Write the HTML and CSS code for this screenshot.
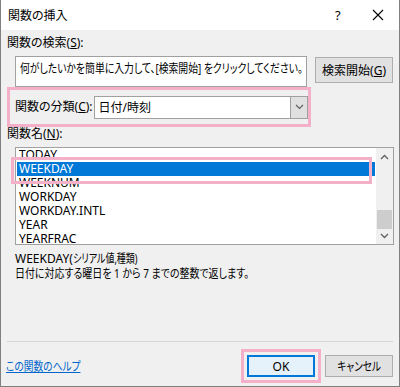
FILE: index.html
```
<!DOCTYPE html>
<html lang="ja">
<head>
<meta charset="utf-8">
<link rel="stylesheet" href="styles.css">
</head>
<body>
<div class="window">
  <div class="titlebar">
    <span class="title">関数の挿入</span>
    <span class="help">?</span>
    <span class="close"><svg width="12" height="12" viewBox="0 0 12 12"><path d="M1 1L11 11M11 1L1 11" stroke="#000" stroke-width="1.1" fill="none"/></svg></span>
  </div>
  <div class="content">
    <div class="label l-search">関数の検索(<u>S</u>):</div>
    <div class="search-row">
      <div class="textbox"><span class="nar nar-tb">何がしたいかを簡単に入力して、[検索開始] をクリックしてください。</span></div>
      <div class="btn btn-search">検索開始(<u>G</u>)</div>
    </div>
    <div class="cat-hl">
      <span class="label">関数の分類(<u>C</u>):</span>
      <div class="select">
        <span class="sel-text">日付/時刻</span>
        <span class="sel-btn"><svg width="9" height="6" viewBox="0 0 9 6"><path d="M1 1L4.5 4.5L8 1" stroke="#606060" stroke-width="1.2" fill="none"/></svg></span>
      </div>
    </div>
    <div class="label l-name">関数名(<u>N</u>):</div>
    <div class="listbox">
      <div class="items">
        <div class="item partial"><span>TODAY</span></div>
        <div class="item sel">WEEKDAY</div>
        <div class="item">WEEKNUM</div>
        <div class="item">WORKDAY</div>
        <div class="item">WORKDAY.INTL</div>
        <div class="item">YEAR</div>
        <div class="item">YEARFRAC</div>
      </div>
      <div class="scrollbar">
        <span class="arrow"><svg width="9" height="6" viewBox="0 0 9 6"><path d="M1 5L4.5 1.5L8 5" stroke="#606060" stroke-width="1.3" fill="none"/></svg></span>
        <div class="track"><div class="thumb"></div></div>
        <span class="arrow"><svg width="9" height="6" viewBox="0 0 9 6"><path d="M1 1L4.5 4.5L8 1" stroke="#606060" stroke-width="1.3" fill="none"/></svg></span>
      </div>
      <div class="item-hl"></div>
    </div>
    <div class="desc">
      <div class="syntax">WEEKDAY(<span class="nar nar-syn">シリアル値,種類)</span></div>
      <div class="explain"><span class="nar nar-ex">日付に対応する曜日を 1 から 7 までの整数で返します。</span></div>
    </div>
    <div class="sep"></div>
    <div class="footer">
      <div class="link-wrap"><a class="link nar nar-link">この関数のヘルプ</a></div>
      <div class="buttons">
        <div class="ok-hl"><div class="btn btn-ok">OK</div></div>
        <div class="btn btn-cancel"><span class="nar nar-cn mid">キャンセル</span></div>
      </div>
    </div>
  </div>
</div>
</body>
</html>
```
FILE: styles.css
```
* { box-sizing: border-box; }
html, body { margin: 0; padding: 0; }
body {
  width: 400px; height: 387px; overflow: hidden;
  font-family: "Noto Sans", "Noto Sans CJK JP", sans-serif;
  font-size: 12px; color: #000;
  font-feature-settings: "palt";
}
u { text-decoration: underline; text-underline-offset: 1px; }
.nar { display: inline-block; transform-origin: left center; white-space: nowrap; }
.nar.mid { transform-origin: center center; }
.nar-tb { transform: scaleX(0.82); }
.nar-syn { transform: scaleX(0.75); }
.nar-ex { transform: scaleX(0.83); }
.nar-link { transform: scaleX(0.81); }
.nar-cn { transform: scaleX(0.80); }
.window {
  width: 400px; height: 387px;
  background: #f0f0f0;
  border: 1px solid #808080;
  border-top: none;
  display: flex; flex-direction: column;
}
.titlebar {
  height: 30px; background: #fff;
  display: flex; align-items: center;
  padding-left: 7px;
}
.title { flex: 1; font-size: 12px; }
.help { width: 16px; margin-right: 21px; font-size: 13px; }
.close { width: 12px; margin-right: 15px; display: flex; }
.content { padding: 0 6px 0 6px; flex: 1; display: flex; flex-direction: column; }
.label { line-height: 14px; }
.l-search { margin-top: 6px; }
.search-row { display: flex; margin-top: 6px; margin-left: 8px; }
.textbox {
  width: 292px; height: 31px; background: #fff;
  border: 1px solid #a0a0a0;
  padding: 5px 0 0 4px; line-height: 14px; white-space: nowrap; overflow: hidden;
}
.btn {
  background: #e1e1e1; border: 1px solid #adadad;
  display: flex; align-items: center; justify-content: center;
  height: 23px;
}
.btn-search { width: 78px; height: 26px; margin-left: 8px; margin-top: 1px; }
.cat-hl {
  width: 304px; height: 40px;
  border: 3px solid #f3b0c8;
  display: flex; align-items: center;
  padding-left: 5px;
}
.cat-hl .label { width: 80px; }
.select {
  width: 215px; height: 23px; background: #fff;
  border: 1px solid #a0a0a0;
  display: flex; align-items: center;
}
.sel-text { flex: 1; padding-left: 3px; }
.sel-btn {
  width: 17px; height: 21px; background: #e0e0e0;
  border-left: 1px solid #a0a0a0;
  display: flex; align-items: center; justify-content: center;
}
.l-name { height: 20px; }
.listbox {
  position: relative;
  margin-left: 8px; width: 379px; height: 98px;
  background: #fff; border: 1px solid #a0a0a0;
  display: flex;
}
.items { flex: 1; overflow: hidden; padding: 0 1px; }
.item { height: 14px; line-height: 14px; padding-left: 2px; }
.item.partial {
  height: 12px; margin-top: 2px; overflow: hidden;
  display: flex; align-items: flex-end;
}
.item.partial span { display: block; height: 14px; line-height: 14px; flex: none; }
.item.sel { background: #0078d7; color: #fff; }
.scrollbar {
  width: 17px; background: #f0f0f0;
  display: flex; flex-direction: column;
}
.arrow { height: 17px; display: flex; align-items: center; justify-content: center; }
.track { flex: 1; position: relative; }
.thumb { position: absolute; left: 1px; right: 1px; top: 45px; height: 19px; background: #cdcdcd; }
.item-hl {
  position: absolute; left: -5px; top: 9px;
  width: 361px; height: 27px;
  border: 3px solid #f3b0c8;
}
.desc { margin-top: 6px; margin-left: 8px; }
.syntax, .explain { line-height: 15px; white-space: nowrap; }
.sep { height: 1px; background: #d5d5d5; margin-top: 60px; }
.footer { display: flex; align-items: center; margin-top: 7px; }
.link-wrap { flex: 1; margin-left: -1px; }
.link { color: #0066cc; text-decoration: underline; }
.buttons { display: flex; align-items: center; }
.ok-hl { border: 3px solid #f3b0c8; padding: 3px; }
.btn-ok { width: 68px; height: 22px; border: 2px solid #0078d7; background: #e5f1fb; }
.btn-cancel { width: 68px; height: 22px; margin-left: 4px; }
```
